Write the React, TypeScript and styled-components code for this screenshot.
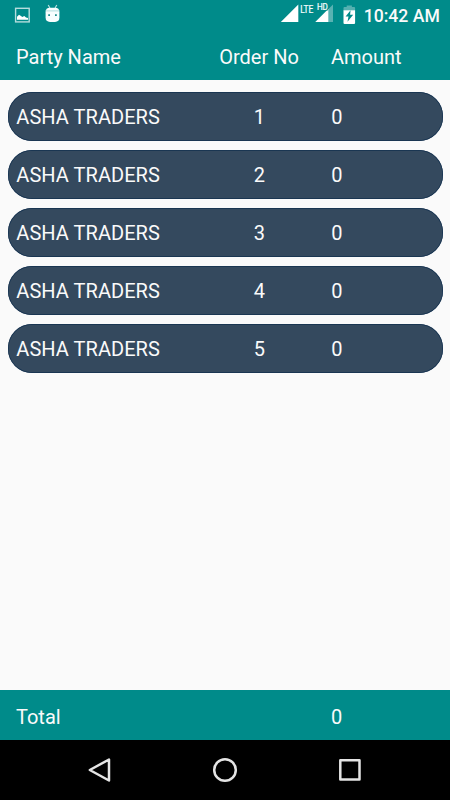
import React from "react";
import styled, { createGlobalStyle } from "styled-components";

const GlobalStyle = createGlobalStyle`
  * { box-sizing: border-box; }
  body { margin: 0; font-family: Roboto, sans-serif; }
`;

const Screen = styled.div`
  width: 450px;
  height: 800px;
  display: flex;
  flex-direction: column;
  background: #fafafa;
  color: #fafafa;
  overflow: hidden;
`;

const StatusBar = styled.header`
  height: 30px;
  flex: none;
  display: flex;
  justify-content: space-between;
  background: #008b8a;
`;

const StatusIcons = styled.svg`
  display: block;
  flex: none;
`;

const StatusRight = styled.div`
  display: flex;
`;

const Clock = styled.time`
  width: 86.3px;
  padding-top: 2px;
  line-height: 28px;
  font-size: 17.6px;
  font-weight: 500;
  white-space: nowrap;
`;

const Columns = styled.div`
  display: grid;
  grid-template-columns: 203px 80px 1fr;
  align-items: center;
  font-size: 20px;
  line-height: 24px;
  white-space: nowrap;
`;

const Bar = styled(Columns)`
  height: 50px;
  flex: none;
  padding: 4px 16px 0;
  background: #008b8a;
`;

const List = styled.main`
  flex: 1;
  display: flex;
  flex-direction: column;
  gap: 9px;
  padding: 11.6px 7.5px 0 7.5px;
`;

const Row = styled(Columns)`
  height: 49px;
  padding: 2px 8.8px 0;
  border-radius: 24px;
  background: #34495e;
  box-shadow: inset 0 0 0 0.7px #12304f;
`;

const Cell = styled.span<{ $center?: boolean; $indent?: number }>`
  text-align: ${(p) => (p.$center ? "center" : "left")};
  padding-left: ${(p) => p.$indent ?? 0}px;
`;

const PartyCell = styled(Cell)`
  letter-spacing: 0.05px;
`;

const NavBar = styled.nav`
  height: 60px;
  flex: none;
  display: flex;
  justify-content: center;
  gap: 95px;
  align-items: center;
  background: #000;
`;

const NavIcon = styled.svg`
  width: 30px;
  height: 30px;
  fill: none;
  stroke: #e4e4e4;
  stroke-width: 2.5;
  stroke-linejoin: round;
`;

const SignalLabel = styled.text`
  font-family: Roboto, sans-serif;
  fill: #f4fcfc;
  stroke: #f4fcfc;
  stroke-width: 0.25;
`;

const orders = [1, 2, 3, 4, 5].map((no) => ({ party: "ASHA TRADERS", no, amount: 0 }));

export default function App() {
  return (
    <>
      <GlobalStyle />
      <Screen>
        <StatusBar>
          <StatusIcons width="70" height="30" viewBox="0 0 70 30">
            <rect x="15.6" y="8.3" width="13.6" height="13.6" fill="none" stroke="#b5dddd" strokeWidth="1.4" />
            <path d="M17 19.8v-3l2-2.1 2 1.2 1.3 1.2 2-1 1.7 1.5 2 .5v1.7z" fill="#fff" />
            <path d="M48.2 5l1.7 3M56.8 5l-1.7 3" stroke="#b5dddd" strokeWidth="1.2" />
            <path d="M45.6 12.2q0-4.4 4.4-4.4h5q4.4 0 4.4 4.4v5.3q0 4.4-4.4 4.4h-5q-4.4 0-4.4-4.4z" fill="#f8fefe" />
            <path d="M45.6 10.9h13.8" stroke="#b2dddd" strokeWidth="1" />
            <path d="M48.2 14.2h1.8v1.7h-1.8zM55 14.2h1.8v1.7H55z" fill="#208f8f" />
          </StatusIcons>
          <StatusRight>
            <StatusIcons width="83.7" height="30" viewBox="279.7 0 83.7 30">
              <path d="M280.5 22L298 4.5V22z" fill="#fff" />
              <SignalLabel x="299.9" y="13" fontSize="10.4" textLength="13.2" lengthAdjust="spacingAndGlyphs">LTE</SignalLabel>
              <path d="M315 22L332.7 4.5V22z" fill="#59b2b2" />
              <path d="M315 22l13-13v13z" fill="#fff" />
              <path d="M315 3.5h12.5v7H319l-4 3z" fill="#008b8a" />
              <SignalLabel x="316.6" y="10.4" fontSize="8.6" textLength="11" lengthAdjust="spacingAndGlyphs">HD</SignalLabel>
              <path d="M343.2 10.5V8q0-1 1-1h2.2V5.5h5.2V7h2.2q1 0 1 1v2.5z" fill="#55b0b0" />
              <path d="M343.2 10.3h11.6V23q0 1-1 1h-9.6q-1 0-1-1z" fill="#fff" />
              <path d="M350.3 10.3l-5 6.1h2.9l-1 5.3 5.7-7h-3.1z" fill="#008b8a" />
            </StatusIcons>
            <Clock>10:42 AM</Clock>
          </StatusRight>
        </StatusBar>
        <Bar>
          <Cell>Party Name</Cell>
          <Cell $center>Order No</Cell>
          <Cell $indent={32}>Amount</Cell>
        </Bar>
        <List>
          {orders.map((o) => (
            <Row key={o.no}>
              <PartyCell>{o.party}</PartyCell>
              <Cell $center>{o.no}</Cell>
              <Cell $indent={32}>{o.amount}</Cell>
            </Row>
          ))}
        </List>
        <Bar>
          <Cell>Total</Cell>
          <Cell />
          <Cell $indent={32}>0</Cell>
        </Bar>
        <NavBar>
          <NavIcon viewBox="0 0 30 30"><path d="M24 4.5v21L4.8 15z" /></NavIcon>
          <NavIcon viewBox="0 0 30 30"><circle cx="15" cy="15" r="10.8" /></NavIcon>
          <NavIcon viewBox="0 0 30 30"><rect x="5.3" y="5.3" width="19.2" height="19.2" /></NavIcon>
        </NavBar>
      </Screen>
    </>
  );
}
